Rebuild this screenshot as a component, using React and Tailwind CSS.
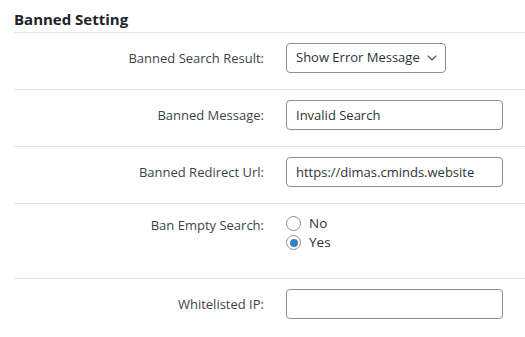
import React, { useState } from "react";
import { ChevronDown } from "lucide-react";

const font = { fontFamily: '"Open Sans", "Noto Sans", sans-serif' };

const Row = ({ label, children, className = "" }) => (
  <div className={`flex items-start border-t border-[#e5e5e5] ${className}`}>
    <div className="w-[250px] shrink-0 text-right text-[13px] text-[#3c434a] leading-[30px]">
      {label}
    </div>
    <div className="ml-[22px]">{children}</div>
  </div>
);

const TextInput = ({ value }) => (
  <input
    type="text"
    defaultValue={value}
    className="w-[217px] h-[30px] rounded border border-[#8c8f94] bg-white px-[9px] text-[13px] text-[#2c3338] outline-none"
  />
);

const Radio = ({ checked, label, onClick }) => (
  <button onClick={onClick} className="flex items-center gap-[8px] h-[19px]">
    <span className="w-[15px] h-[15px] rounded-full border border-[#8c8f94] bg-white flex items-center justify-center">
      {checked && <span className="w-[8px] h-[8px] rounded-full bg-[#3582c4]" />}
    </span>
    <span className="text-[13.5px] text-[#2c3338]">{label}</span>
  </button>
);

export default function App() {
  const [banEmpty, setBanEmpty] = useState("yes");

  return (
    <div className="w-[525px] h-[337px] bg-white pl-[14px] overflow-hidden" style={font}>
      <h2 className="pt-[10px] pb-[4px] text-[15px] font-bold text-[#1d2327] leading-[18px]">
        Banned Setting
      </h2>

      <Row label="Banned Search Result:" className="pt-[10px] h-[57px]">
        <div className="relative w-[160px] h-[30px] rounded border border-[#8c8f94] bg-white flex items-center pl-[9px]">
          <span className="text-[13px] text-[#2c3338]">Show Error Message</span>
          <ChevronDown className="absolute right-[5px] top-[6px] w-[16px] h-[16px] text-[#50575e]" strokeWidth={1.6} />
        </div>
      </Row>

      <Row label="Banned Message:" className="pt-[10px] h-[57px]">
        <TextInput value="Invalid Search" />
      </Row>

      <Row label="Banned Redirect Url:" className="pt-[10px] h-[57px]">
        <TextInput value="https://dimas.cminds.website" />
      </Row>

      <Row label="Ban Empty Search:" className="pt-[6px] h-[75px]">
        <div className="flex flex-col pt-[4px]">
          <Radio label="No" checked={banEmpty === "no"} onClick={() => setBanEmpty("no")} />
          <Radio label="Yes" checked={banEmpty === "yes"} onClick={() => setBanEmpty("yes")} />
        </div>
      </Row>

      <Row label="Whitelisted IP:" className="pt-[10px] h-[59px]">
        <TextInput value="" />
      </Row>
    </div>
  );
}
